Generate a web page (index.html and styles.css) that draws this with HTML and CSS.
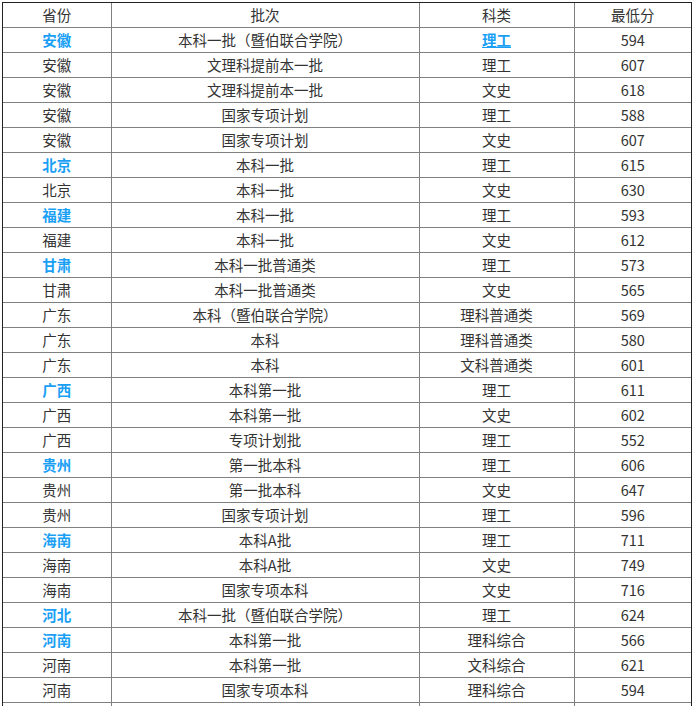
FILE: index.html
```html
<!DOCTYPE html>
<html lang="zh-CN">
<head>
<meta charset="utf-8">
<title>分数线</title>
<link rel="stylesheet" href="styles.css">
</head>
<body>
<div class="wrap">
<table class="scores">
<colgroup><col class="c1"><col class="c2"><col class="c3"><col class="c4"></colgroup>
<tbody>
<tr class="head"><td>省份</td><td>批次</td><td>科类</td><td>最低分</td></tr>
<tr><td class="hl">安徽</td><td>本科一批（暨伯联合学院）</td><td><a class="link" href="#">理工</a></td><td>594</td></tr>
<tr><td>安徽</td><td>文理科提前本一批</td><td>理工</td><td>607</td></tr>
<tr><td>安徽</td><td>文理科提前本一批</td><td>文史</td><td>618</td></tr>
<tr><td>安徽</td><td>国家专项计划</td><td>理工</td><td>588</td></tr>
<tr><td>安徽</td><td>国家专项计划</td><td>文史</td><td>607</td></tr>
<tr><td class="hl">北京</td><td>本科一批</td><td>理工</td><td>615</td></tr>
<tr><td>北京</td><td>本科一批</td><td>文史</td><td>630</td></tr>
<tr><td class="hl">福建</td><td>本科一批</td><td>理工</td><td>593</td></tr>
<tr><td>福建</td><td>本科一批</td><td>文史</td><td>612</td></tr>
<tr><td class="hl">甘肃</td><td>本科一批普通类</td><td>理工</td><td>573</td></tr>
<tr><td>甘肃</td><td>本科一批普通类</td><td>文史</td><td>565</td></tr>
<tr><td>广东</td><td>本科（暨伯联合学院）</td><td>理科普通类</td><td>569</td></tr>
<tr><td>广东</td><td>本科</td><td>理科普通类</td><td>580</td></tr>
<tr><td>广东</td><td>本科</td><td>文科普通类</td><td>601</td></tr>
<tr><td class="hl">广西</td><td>本科第一批</td><td>理工</td><td>611</td></tr>
<tr><td>广西</td><td>本科第一批</td><td>文史</td><td>602</td></tr>
<tr><td>广西</td><td>专项计划批</td><td>理工</td><td>552</td></tr>
<tr><td class="hl">贵州</td><td>第一批本科</td><td>理工</td><td>606</td></tr>
<tr><td>贵州</td><td>第一批本科</td><td>文史</td><td>647</td></tr>
<tr><td>贵州</td><td>国家专项计划</td><td>理工</td><td>596</td></tr>
<tr><td class="hl">海南</td><td>本科A批</td><td>理工</td><td>711</td></tr>
<tr><td>海南</td><td>本科A批</td><td>文史</td><td>749</td></tr>
<tr><td>海南</td><td>国家专项本科</td><td>文史</td><td>716</td></tr>
<tr><td class="hl">河北</td><td>本科一批（暨伯联合学院）</td><td>理工</td><td>624</td></tr>
<tr><td class="hl">河南</td><td>本科第一批</td><td>理科综合</td><td>566</td></tr>
<tr><td>河南</td><td>本科第一批</td><td>文科综合</td><td>621</td></tr>
<tr><td>河南</td><td>国家专项本科</td><td>理科综合</td><td>594</td></tr>
<tr class="tail"><td></td><td></td><td></td><td></td></tr>
</tbody>
</table>
</div>
</body>
</html>
```

FILE: styles.css
```css
html, body {
  margin: 0;
  padding: 0;
  background: #ffffff;
}

body {
  padding: 2px;
  font-family: "Noto Sans CJK SC", "Noto Sans", sans-serif;
  font-size: 14.5px;
  color: #333333;
}

.wrap {
  width: 688px;
  border: 1px solid #222222;
}

.scores {
  width: 688px;
  table-layout: fixed;
  border-collapse: collapse;
}

.c1 { width: 108px; }
.c2 { width: 308px; }
.c3 { width: 155px; }
.c4 { width: 117px; }

.scores td {
  height: 24px;
  padding: 0;
  line-height: 24px;
  text-align: center;
  border: 1px solid #808080;
  white-space: nowrap;
}

.scores tr:first-child td { border-top: 0; }
.scores td:first-child { border-left: 0; }
.scores td:last-child { border-right: 0; }

.hl {
  color: #1a9ff5;
  font-weight: bold;
}

.link {
  color: #1a9ff5;
  font-weight: bold;
  text-decoration: underline;
}
```
